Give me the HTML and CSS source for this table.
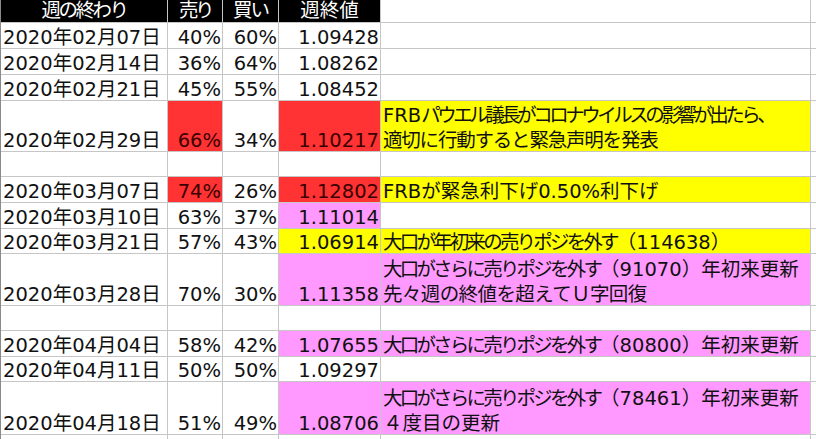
FILE: index.html
```html
<!DOCTYPE html>
<html lang="ja">
<head>
<meta charset="utf-8">
<link rel="stylesheet" href="styles.css">
</head>
<body>
<div class="sheet">
  <div class="c hd ctr"><span class="t hs1">週の終わり</span></div>
  <div class="c hd ctr"><span class="t hs2">売り</span></div>
  <div class="c hd ctr"><span class="t hs3">買い</span></div>
  <div class="c hd ctr"><span class="t">週終値</span></div>
  <div class="c"></div>
  <div class="c"></div>

  <div class="c"><span class="t">2020年02月07日</span></div>
  <div class="c num"><span class="t">40%</span></div>
  <div class="c num"><span class="t">60%</span></div>
  <div class="c num"><span class="t">1.09428</span></div>
  <div class="c"></div>
  <div class="c"></div>

  <div class="c"><span class="t">2020年02月14日</span></div>
  <div class="c num"><span class="t">36%</span></div>
  <div class="c num"><span class="t">64%</span></div>
  <div class="c num"><span class="t">1.08262</span></div>
  <div class="c"></div>
  <div class="c"></div>

  <div class="c"><span class="t">2020年02月21日</span></div>
  <div class="c num"><span class="t">45%</span></div>
  <div class="c num"><span class="t">55%</span></div>
  <div class="c num"><span class="t">1.08452</span></div>
  <div class="c"></div>
  <div class="c"></div>

  <div class="c"><span class="t">2020年02月29日</span></div>
  <div class="c num red"><span class="t">66%</span></div>
  <div class="c num"><span class="t">34%</span></div>
  <div class="c num red"><span class="t">1.10217</span></div>
  <div class="c note yellow"><span class="t">FRB<span class="ls35">パウエル議長がコロナウイルスの影響が出たら、</span><br><span class="ls12">適切に行動すると緊急声明を発表</span></span></div>
  <div class="c"></div>

  <div class="c"></div>
  <div class="c"></div>
  <div class="c"></div>
  <div class="c"></div>
  <div class="c"></div>
  <div class="c"></div>

  <div class="c"><span class="t">2020年03月07日</span></div>
  <div class="c num red"><span class="t">74%</span></div>
  <div class="c num"><span class="t">26%</span></div>
  <div class="c num red"><span class="t">1.12802</span></div>
  <div class="c note yellow"><span class="t">FRBが緊急利下げ0.50%利下げ</span></div>
  <div class="c"></div>

  <div class="c"><span class="t">2020年03月10日</span></div>
  <div class="c num"><span class="t">63%</span></div>
  <div class="c num"><span class="t">37%</span></div>
  <div class="c num pink"><span class="t">1.11014</span></div>
  <div class="c"></div>
  <div class="c"></div>

  <div class="c"><span class="t">2020年03月21日</span></div>
  <div class="c num"><span class="t">57%</span></div>
  <div class="c num"><span class="t">43%</span></div>
  <div class="c num yellow"><span class="t">1.06914</span></div>
  <div class="c note yellow"><span class="t"><span class="ls28">大口が年初来の売りポジを外す</span>（114638）</span></div>
  <div class="c"></div>

  <div class="c"><span class="t">2020年03月28日</span></div>
  <div class="c num"><span class="t">70%</span></div>
  <div class="c num"><span class="t">30%</span></div>
  <div class="c num pink"><span class="t">1.11358</span></div>
  <div class="c note pink"><span class="t"><span class="ls28">大口がさらに売りポジを外す</span>（91070）年初来更新<br><span class="ls06">先々週の終値を超えてＵ字回復</span></span></div>
  <div class="c"></div>

  <div class="c"></div>
  <div class="c"></div>
  <div class="c"></div>
  <div class="c"></div>
  <div class="c"></div>
  <div class="c"></div>

  <div class="c"><span class="t">2020年04月04日</span></div>
  <div class="c num"><span class="t">58%</span></div>
  <div class="c num"><span class="t">42%</span></div>
  <div class="c num pink"><span class="t">1.07655</span></div>
  <div class="c note pink"><span class="t"><span class="ls28">大口がさらに売りポジを外す</span>（80800）年初来更新</span></div>
  <div class="c"></div>

  <div class="c"><span class="t">2020年04月11日</span></div>
  <div class="c num"><span class="t">50%</span></div>
  <div class="c num"><span class="t">50%</span></div>
  <div class="c num"><span class="t">1.09297</span></div>
  <div class="c"></div>
  <div class="c"></div>

  <div class="c"><span class="t">2020年04月18日</span></div>
  <div class="c num"><span class="t">51%</span></div>
  <div class="c num"><span class="t">49%</span></div>
  <div class="c num pink"><span class="t">1.08706</span></div>
  <div class="c note pink"><span class="t"><span class="ls28">大口がさらに売りポジを外す</span>（78461）年初来更新<br>４度目の更新</span></div>
  <div class="c"></div>

  <div class="c"></div>
  <div class="c"></div>
  <div class="c"></div>
  <div class="c"></div>
  <div class="c"></div>
  <div class="c"></div>
</div>
</body>
</html>
```

FILE: styles.css
```css
html, body {
  margin: 0;
  padding: 0;
  background: #ffffff;
  overflow: hidden;
}

.sheet {
  display: grid;
  grid-template-columns: 166px 54px 55px 101px 429px 1fr;
  grid-template-rows: 22px 25px 25px 25px 50px 24px 25px 25px 24px 51px 24px 25px 24px 52px 30px;
  gap: 1px;
  background: #c6c6c6;
  border-left: 1px solid #8a8a8a;
  width: 815px;
  height: 439px;
  overflow: hidden;
  font-family: "DejaVu Sans", "Noto Sans CJK JP", sans-serif;
  font-size: 19.5px;
  color: #111111;
}

.c {
  background: #ffffff;
  display: flex;
  align-items: flex-end;
  padding: 0 1px 0 2px;
  overflow: visible;
  white-space: nowrap;
  min-width: 0;
}

.t {
  display: block;
  line-height: 25px;
  margin-bottom: -2px;
}

.hd {
  background: #000000;
  color: #ffffff;
  align-items: center;
}

.hd .t {
  line-height: 22px;
  margin-bottom: 0;
}

.ctr {
  justify-content: center;
  padding: 0;
}

.num {
  justify-content: flex-end;
  padding: 0 1px 0 0;
}

.note {
  padding-left: 2px;
}

.hs1 { letter-spacing: -2.5px; }
.hs2 { letter-spacing: -3.5px; }
.hs3 { letter-spacing: -2px; }

.ls35 { letter-spacing: -3.5px; }
.ls28 { letter-spacing: -2.8px; }
.ls12 { letter-spacing: -1.2px; }
.ls06 { letter-spacing: -0.6px; }

.red {
  background: #ff3333;
  color: #3a0000;
}

.yellow {
  background: #ffff00;
}

.pink {
  background: #ff99ff;
}
```
